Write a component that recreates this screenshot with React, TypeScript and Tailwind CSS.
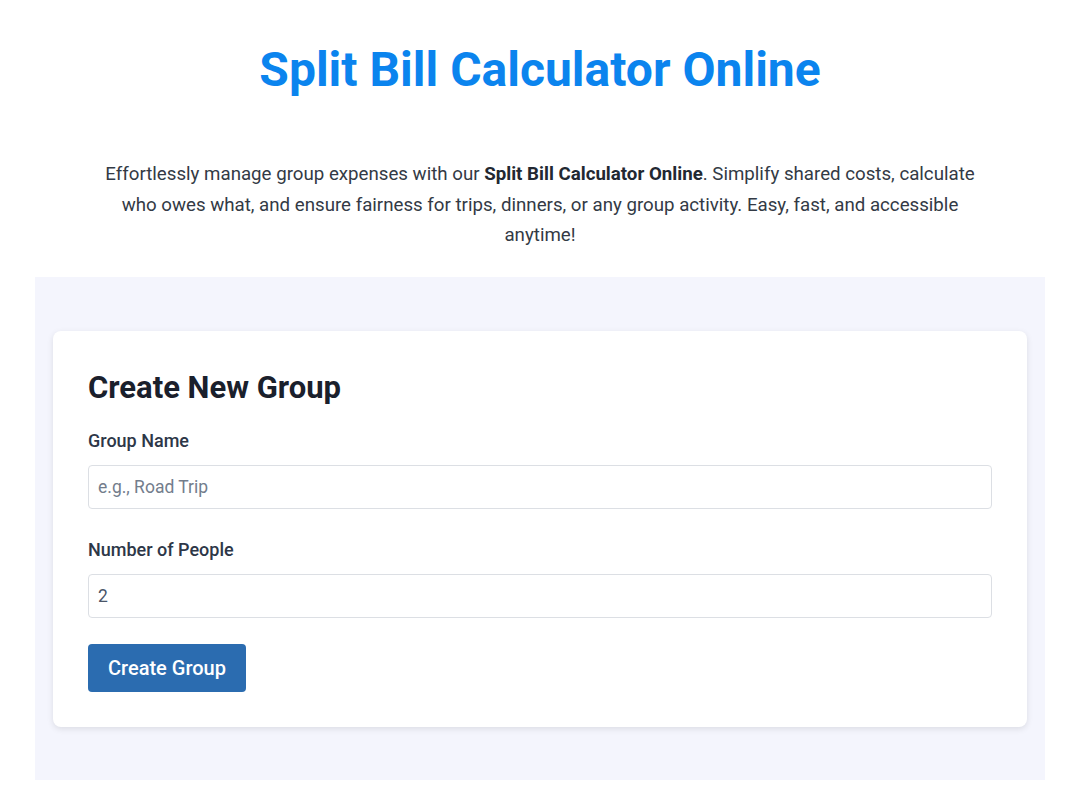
export default function App() {
  return (
    <div className="min-h-screen bg-white font-['Roboto',sans-serif]">
      <div className="mx-auto max-w-[1010px]">
        <h1 className="pt-[40px] text-center text-[48px] font-bold leading-[60px] text-[#0b84ee]">
          Split Bill Calculator Online
        </h1>
        <p className="mx-auto mt-[59px] max-w-[890px] text-center text-[18.7px] leading-[30.5px] text-[#333a45]">
          Effortlessly manage group expenses with our{" "}
          <strong className="font-bold text-[#222831]">Split Bill Calculator Online</strong>. Simplify shared
          costs, calculate who owes what, and ensure fairness for trips, dinners, or any group activity. Easy,
          fast, and accessible anytime!
        </p>
        <section className="mt-[26px] bg-[#f4f5fd] px-[18px] pt-[54px] pb-[53px]">
          <div className="rounded-lg bg-white px-[35px] pt-[37px] pb-[35px] shadow-[0_2px_6px_rgba(0,0,0,0.1)]">
            <h2 className="text-[31px] font-bold leading-[40px] text-[#1a202c]">Create New Group</h2>
            <label className="mt-[21px] block text-[18px] font-medium leading-[24px] text-[#2d3748]">
              Group Name
            </label>
            <input
              type="text"
              placeholder="e.g., Road Trip"
              className="mt-[12px] block h-[44px] w-full rounded border border-[#dcdfe4] px-[9px] text-[17.5px] text-[#4a5568] placeholder:text-[#737d8c] outline-none"
            />
            <label className="mt-[29px] block text-[18px] font-medium leading-[24px] text-[#2d3748]">
              Number of People
            </label>
            <input
              type="number"
              defaultValue={2}
              className="mt-[12px] block h-[44px] w-full rounded border border-[#dcdfe4] px-[9px] text-[17.5px] text-[#4a5568] outline-none"
            />
            <button
              type="button"
              className="mt-[26px] block h-[48px] rounded bg-[#2b6cb0] px-[20px] text-[20px] font-medium text-white"
            >
              Create Group
            </button>
          </div>
        </section>
      </div>
    </div>
  );
}
